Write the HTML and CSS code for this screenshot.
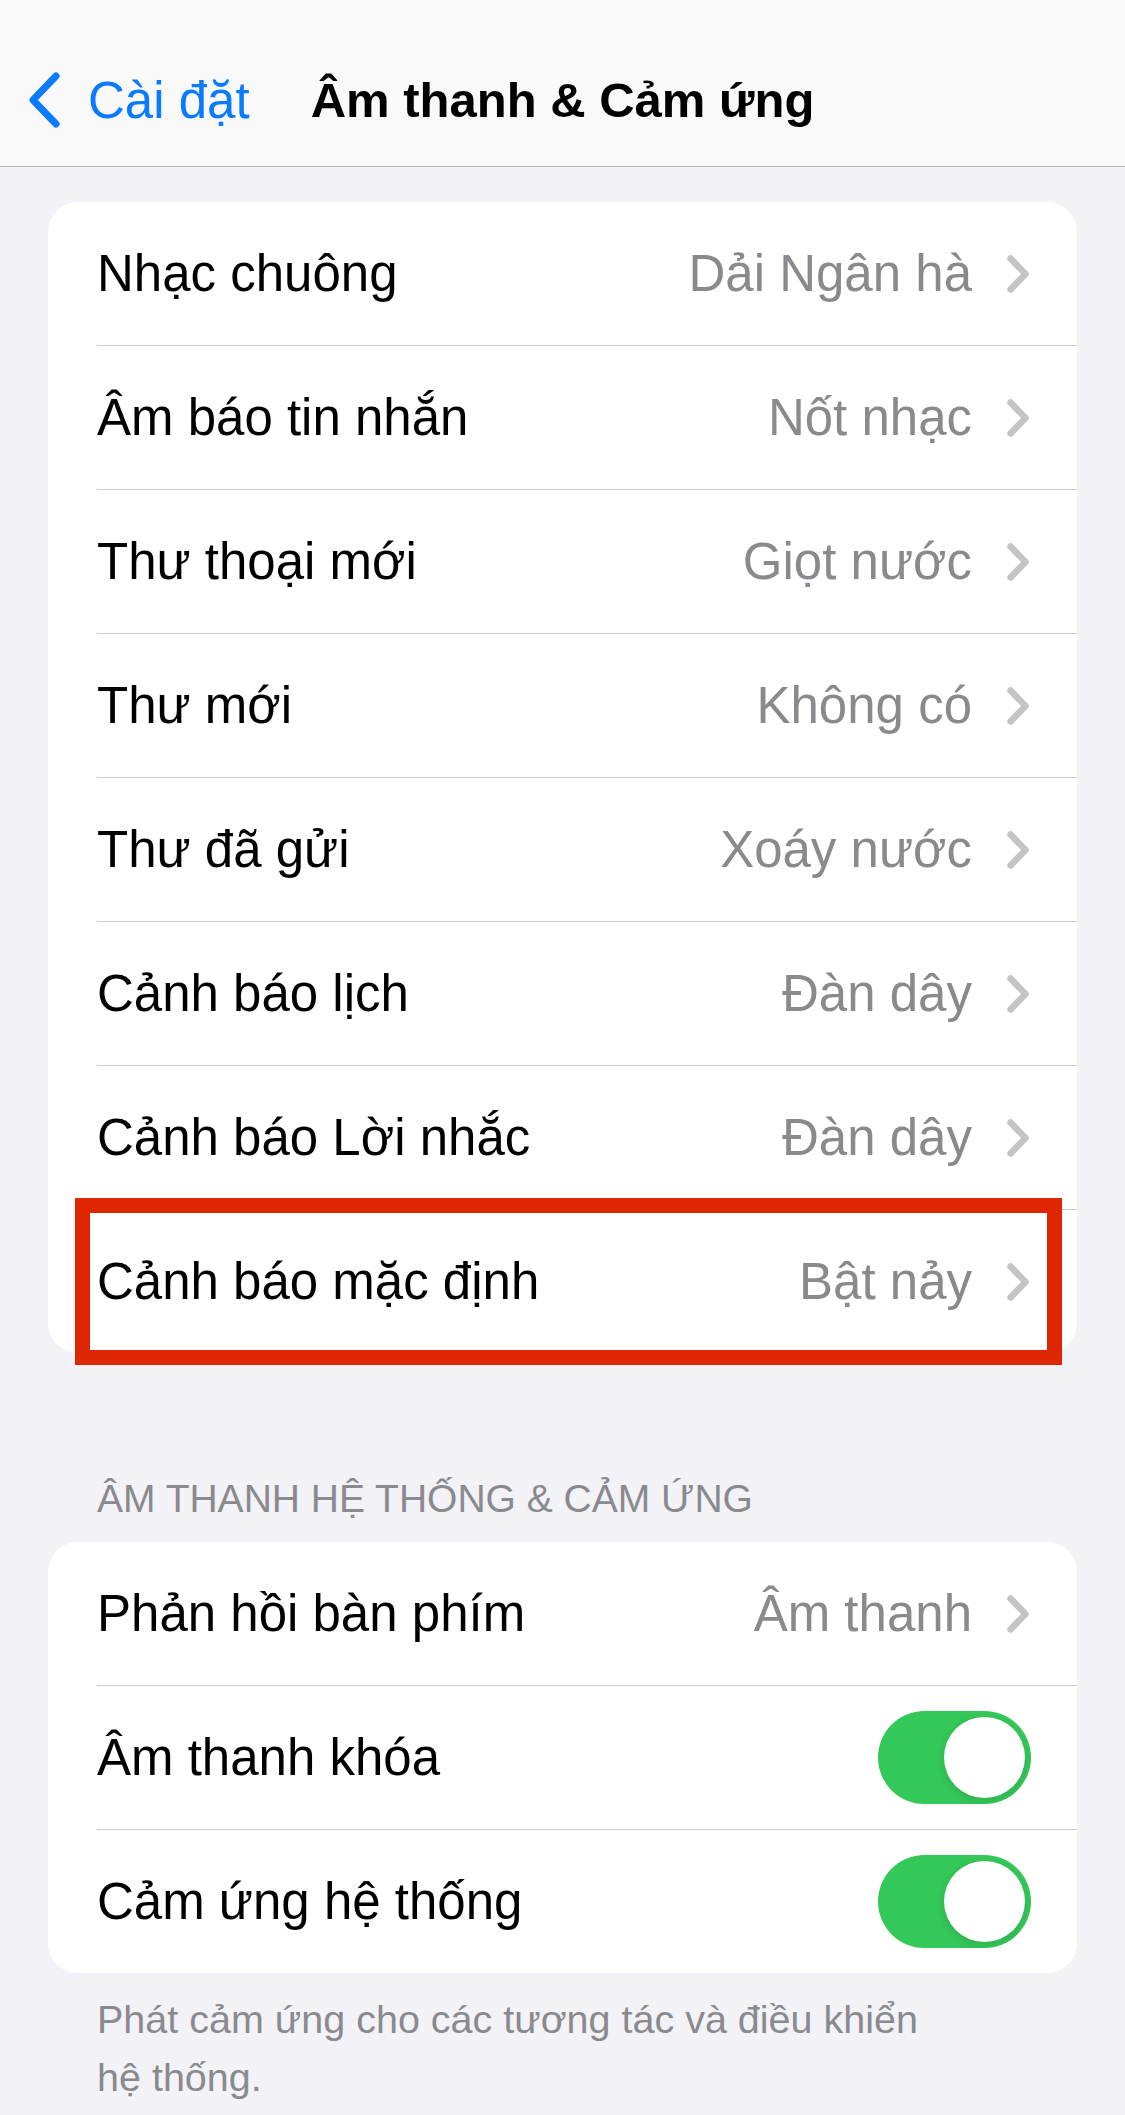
FILE: index.html
```html
<!DOCTYPE html>
<html lang="vi">
<head>
  <meta charset="UTF-8" />
  <meta name="viewport" content="width=device-width, initial-scale=1.0" />
  <title>Âm thanh &amp; Cảm ứng</title>
  <link rel="stylesheet" href="styles.css">
</head>
<body>
  <header class="navbar">
    <a class="back" href="#">
      <svg class="back-icon" viewBox="0 0 34 56" width="34" height="56">
        <path d="M29 4 L6 28 L29 52" fill="none" stroke="#0a7aff" stroke-width="7" stroke-linecap="round" stroke-linejoin="round" />
      </svg>
      <span>Cài đặt</span>
    </a>
    <h1 class="title">Âm thanh &amp; Cảm ứng</h1>
    <div></div>
  </header>

  <main class="content">
    <ul class="group first">
      <li class="row"><div class="row-body"><span class="label">Nhạc chuông</span><span class="value">Dải Ngân hà</span><svg class="chevron" viewBox="0 0 22 38" width="22" height="38"><path d="M3.5 3.5 L18.5 19 L3.5 34.5" /></svg></div></li>
      <li class="row"><div class="row-body"><span class="label">Âm báo tin nhắn</span><span class="value">Nốt nhạc</span><svg class="chevron" viewBox="0 0 22 38" width="22" height="38"><path d="M3.5 3.5 L18.5 19 L3.5 34.5" /></svg></div></li>
      <li class="row"><div class="row-body"><span class="label">Thư thoại mới</span><span class="value">Giọt nước</span><svg class="chevron" viewBox="0 0 22 38" width="22" height="38"><path d="M3.5 3.5 L18.5 19 L3.5 34.5" /></svg></div></li>
      <li class="row"><div class="row-body"><span class="label">Thư mới</span><span class="value">Không có</span><svg class="chevron" viewBox="0 0 22 38" width="22" height="38"><path d="M3.5 3.5 L18.5 19 L3.5 34.5" /></svg></div></li>
      <li class="row"><div class="row-body"><span class="label">Thư đã gửi</span><span class="value">Xoáy nước</span><svg class="chevron" viewBox="0 0 22 38" width="22" height="38"><path d="M3.5 3.5 L18.5 19 L3.5 34.5" /></svg></div></li>
      <li class="row"><div class="row-body"><span class="label">Cảnh báo lịch</span><span class="value">Đàn dây</span><svg class="chevron" viewBox="0 0 22 38" width="22" height="38"><path d="M3.5 3.5 L18.5 19 L3.5 34.5" /></svg></div></li>
      <li class="row"><div class="row-body"><span class="label">Cảnh báo Lời nhắc</span><span class="value">Đàn dây</span><svg class="chevron" viewBox="0 0 22 38" width="22" height="38"><path d="M3.5 3.5 L18.5 19 L3.5 34.5" /></svg></div></li>
      <li class="row highlighted"><div class="row-body"><span class="label">Cảnh báo mặc định</span><span class="value">Bật nảy</span><svg class="chevron" viewBox="0 0 22 38" width="22" height="38"><path d="M3.5 3.5 L18.5 19 L3.5 34.5" /></svg></div></li>
    </ul>

    <h2 class="group-header">Âm thanh hệ thống &amp; cảm ứng</h2>
    <ul class="group">
      <li class="row"><div class="row-body"><span class="label">Phản hồi bàn phím</span><span class="value">Âm thanh</span><svg class="chevron" viewBox="0 0 22 38" width="22" height="38"><path d="M3.5 3.5 L18.5 19 L3.5 34.5" /></svg></div></li>
      <li class="row"><div class="row-body switch-row"><span class="label">Âm thanh khóa</span><span class="switch on"></span></div></li>
      <li class="row"><div class="row-body switch-row"><span class="label">Cảm ứng hệ thống</span><span class="switch on"></span></div></li>
    </ul>
    <p class="group-footer">Phát cảm ứng cho các tương tác và điều khiển hệ thống.</p>
  </main>
</body>
</html>
```

FILE: styles.css
```css
body {
  margin: 0;
  font-family: "Liberation Sans", Arial, sans-serif;
  background-color: #f2f2f7;
  color: #000;
}

/* top navigation bar */
.navbar {
  display: grid;
  grid-template-columns: 1fr auto 1fr;
  align-items: center;
  height: 132px;
  padding-top: 34px;
  background-color: #f9f9fa;
  border-bottom: 1px solid #b8b8bb;
}
.back {
  display: flex;
  align-items: center;
  gap: 27px;
  padding-left: 27px;
  color: #0a7aff;
  font-size: 51px;
  text-decoration: none;
}
.back-icon {
  display: block;
}
.title {
  margin: 0;
  font-size: 49px;
  font-weight: bold;
  white-space: nowrap;
}

.content {
  padding: 35px 48px 0;
}

/* grouped list cards */
.group {
  list-style: none;
  margin: 0;
  padding: 0;
  background-color: #fff;
  border-radius: 30px;
}
.row {
  position: relative;
  padding-left: 49px;
}
.row-body {
  display: flex;
  align-items: center;
  height: 143px;
  padding-right: 48px;
  border-bottom: 1px solid #c8c8cc;
  font-size: 51px;
}
.row:last-child .row-body {
  border-bottom: none;
}
.label {
  flex: 1;
  white-space: nowrap;
}
.value {
  color: #8a8a8e;
  margin-right: 35px;
  white-space: nowrap;
}
.chevron {
  display: block;
  fill: none;
  stroke: #c4c4c7;
  stroke-width: 6.5;
  stroke-linecap: round;
  stroke-linejoin: round;
}
.switch-row {
  padding-right: 46px;
}

/* iOS style toggle */
.switch {
  position: relative;
  width: 153px;
  height: 93px;
  border-radius: 47px;
  background-color: #e9e9eb;
}
.switch.on {
  background-color: #34c759;
}
.switch::after {
  content: "";
  position: absolute;
  top: 6px;
  left: 6px;
  width: 81px;
  height: 81px;
  border-radius: 50%;
  background-color: #fff;
  box-shadow: 0 3px 8px rgba(0, 0, 0, 0.12);
}
.switch.on::after {
  left: 66px;
}

/* red annotation frame */
.highlighted::after {
  content: "";
  position: absolute;
  top: -12px;
  bottom: -12px;
  left: 27px;
  right: 15px;
  border: 15px solid #de2600;
  pointer-events: none;
}

.group-header {
  margin: 122px 0 20px;
  padding-left: 49px;
  font-size: 39px;
  font-weight: normal;
  line-height: 47px;
  text-transform: uppercase;
  color: #8a8a8e;
}
.group-footer {
  margin: 17px 0 0;
  padding-left: 49px;
  max-width: 840px;
  font-size: 39.5px;
  line-height: 58px;
  color: #8a8a8e;
}
```
